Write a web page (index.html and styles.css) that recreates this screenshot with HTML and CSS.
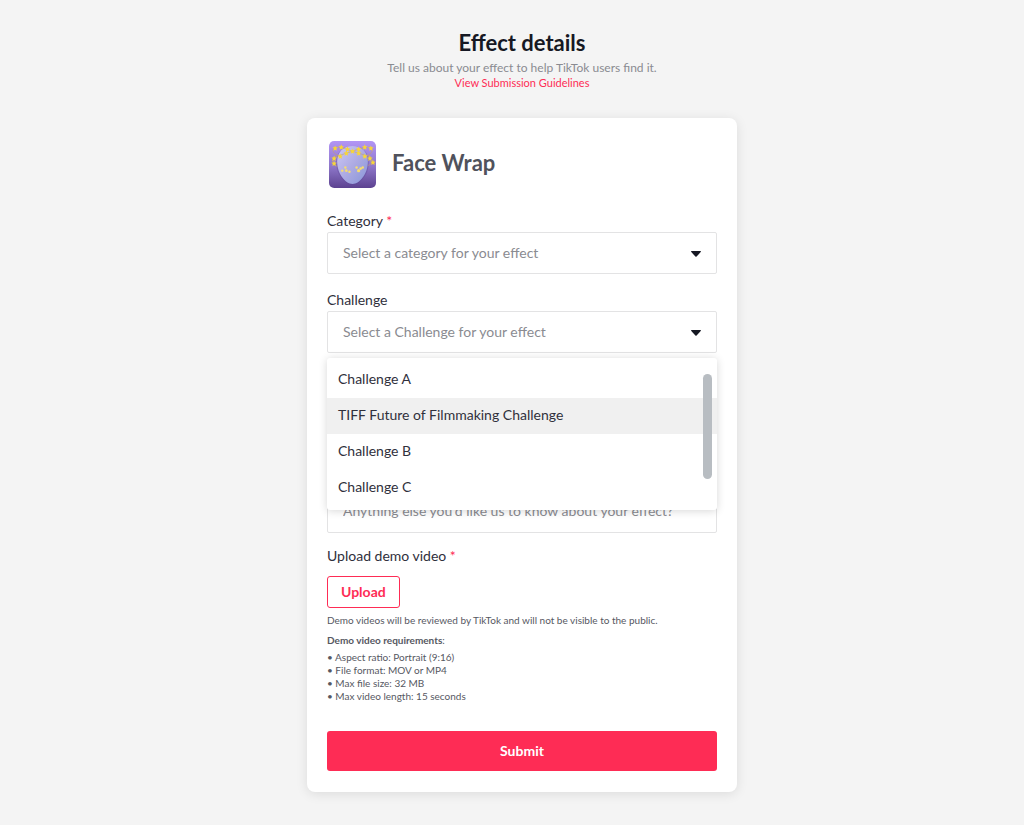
FILE: index.html
```html
<!DOCTYPE html>
<html lang="en">
<head>
    <meta charset="UTF-8">
    <meta name="viewport" content="width=device-width, initial-scale=1.0">
    <title>Effect details</title>
    <link rel="stylesheet" href="styles.css">
</head>
<body>
    <header class="header">
        <h1>Effect details</h1>
        <p>Tell us about your effect to help TikTok users find it.</p>
        <a href="#">View Submission Guidelines</a>
    </header>

    <form class="card">
        <div class="effect">
            <svg class="effect-icon" viewBox="0 0 46 46" aria-hidden="true">
                <defs>
                    <linearGradient id="iconBg" x1="0" y1="0" x2="0" y2="1">
                        <stop offset="0" stop-color="#b295f5"/>
                        <stop offset="0.55" stop-color="#8d76c9"/>
                        <stop offset="1" stop-color="#5c4290"/>
                    </linearGradient>
                    <linearGradient id="iconFace" x1="0" y1="0" x2="1" y2="1">
                        <stop offset="0" stop-color="#cdc9f5"/>
                        <stop offset="0.5" stop-color="#aeabe3"/>
                        <stop offset="1" stop-color="#8795d8"/>
                    </linearGradient>
                    <path id="star" d="M0-2.7 .8-.9 2.7-.8 1.2.6 1.7 2.5 0 1.5-1.7 2.5-1.2.6-2.7-.8-.8-.9z"/>
                </defs>
                <rect width="46" height="46" rx="5" fill="url(#iconBg)"/>
                <path d="M23 5C12 5 7 13 7 21c0 12 9 22 16 22s16-10 16-22C39 13 34 5 23 5z" fill="#594596" opacity="0.35"/>
                <path d="M23 5C13 5 8 12 8 20c0 12 8 22 15 22s15-10 15-22C38 12 33 5 23 5z" fill="url(#iconFace)"/>
                <path d="M12 15C2 13 2 6 8 6c5 0 9 2 15 4s12 4 17 5M35 15c9-2 9-9 3-9-5 0-9 2-15 4S10 14 5 16M5 16c-3 3-2 7 3 9M40 15c4 3 3 7-2 9" fill="none" stroke="#c5a36a" stroke-width="0.6"/>
                <g fill="#f7d638">
                    <use href="#star" x="6" y="7"/>
                    <use href="#star" x="12" y="6"/>
                    <use href="#star" x="18" y="8"/>
                    <use href="#star" x="23" y="10"/>
                    <use href="#star" x="29" y="8"/>
                    <use href="#star" x="35" y="6"/>
                    <use href="#star" x="41" y="7"/>
                    <use href="#star" x="11" y="15"/>
                    <use href="#star" x="17" y="12"/>
                    <use href="#star" x="29" y="12"/>
                    <use href="#star" x="35" y="15"/>
                    <use href="#star" x="5" y="17"/>
                    <use href="#star" x="5" y="22"/>
                    <use href="#star" x="40" y="17"/>
                    <use href="#star" x="43" y="21"/>
                </g>
                <g fill="#f7dc70">
                    <circle cx="13" cy="29" r="1.2"/>
                    <circle cx="16" cy="26" r="1.2"/>
                    <circle cx="17" cy="29" r="1.3"/>
                    <circle cx="20" cy="30" r="1.2"/>
                    <circle cx="27" cy="26" r="1.2"/>
                    <circle cx="29" cy="29" r="1.6"/>
                    <circle cx="31" cy="27" r="1.3"/>
                    <circle cx="33" cy="26" r="1.2"/>
                </g>
            </svg>
            <h2>Face Wrap</h2>
        </div>

        <div class="field">
            <label for="category">Category <span class="required">*</span></label>
            <div class="select">
                <select id="category" required>
                    <option value="">Select a category for your effect</option>
                </select>
                <svg class="arrow" viewBox="0 0 10 6" aria-hidden="true"><path d="M.5 0h9q.8.3.2 1L5.6 5.6q-.6.5-1.2 0L.3 1Q-.3.3.5 0z"/></svg>
            </div>
        </div>

        <div class="field">
            <label for="challenge">Challenge</label>
            <div class="select">
                <select id="challenge">
                    <option value="">Select a Challenge for your effect</option>
                </select>
                <svg class="arrow" viewBox="0 0 10 6" aria-hidden="true"><path d="M.5 0h9q.8.3.2 1L5.6 5.6q-.6.5-1.2 0L.3 1Q-.3.3.5 0z"/></svg>
                <div class="menu">
                    <ul role="listbox" aria-label="Challenge">
                        <li role="option">Challenge A</li>
                        <li role="option" class="active" aria-selected="true">TIFF Future of Filmmaking Challenge</li>
                        <li role="option">Challenge B</li>
                        <li role="option">Challenge C</li>
                    </ul>
                    <span class="scroll-thumb"></span>
                </div>
            </div>
        </div>

        <div class="field notes">
            <input type="text" aria-label="Notes" placeholder="Anything else you'd like us to know about your effect?">
        </div>

        <div class="upload">
            <label for="uploadButton">Upload demo video <span class="required">*</span></label>
            <button type="button" id="uploadButton" class="upload-button">Upload</button>
            <p>Demo videos will be reviewed by TikTok and will not be visible to the public.</p>
            <p><strong>Demo video requirements</strong>:</p>
            <ul class="requirements">
                <li>• Aspect ratio: Portrait (9:16)</li>
                <li>• File format: MOV or MP4</li>
                <li>• Max file size: 32 MB</li>
                <li>• Max video length: 15 seconds</li>
            </ul>
        </div>

        <button type="submit" class="submit-button">Submit</button>
    </form>
</body>
</html>
```

FILE: styles.css
```css
*, *:before, *:after {
    box-sizing: border-box;
}

body {
    min-height: 100vh;
    margin: 0;
    padding: 30px 0 33px 20px;
    background: #f4f4f4;
    color: #30303c;
    font-family: Lato, sans-serif;
    font-size: 14px;
    line-height: 18px;
}

h1, h2, p, ul {
    margin: 0;
    padding: 0;
}

ul {
    list-style: none;
}

.header {
    display: flex;
    flex-direction: column;
    align-items: center;
    margin-bottom: 28px;
}

.header h1 {
    margin-bottom: 4px;
    color: #161823;
    font-size: 22px;
    line-height: 26px;
}

.header p {
    color: #8a8b91;
    font-size: 12px;
    line-height: 15px;
}

.header a {
    color: #fe2c55;
    font-size: 11px;
    line-height: 15px;
    text-decoration: none;
}

.card {
    max-width: 430px;
    margin: 0 auto;
    padding: 23px 20px 21px;
    background: #fff;
    border-radius: 8px;
    box-shadow: 0 2px 12px rgba(0, 0, 0, 0.1);
}

.effect {
    display: flex;
    align-items: center;
    gap: 16px;
    margin-bottom: 24px;
    padding-left: 2px;
}

.effect-icon {
    width: 47px;
    height: 47px;
}

.effect h2 {
    padding-bottom: 4px;
    color: #50525c;
    font-size: 22px;
    line-height: 26px;
}

.field {
    display: flex;
    flex-direction: column;
    gap: 2px;
    margin-bottom: 17px;
}

.required {
    color: #fe2c55;
}

.select {
    position: relative;
}

.field select,
.field input {
    width: 100%;
    height: 42px;
    padding: 0 15px 2px;
    border: 1px solid #e3e3e4;
    border-radius: 2px;
    background: #fff;
    color: #8a8b91;
    font-family: inherit;
    font-size: 14px;
    appearance: none;
}

.field input {
    padding-bottom: 4px;
}

.field input::placeholder {
    color: #8a8b91;
}

.arrow {
    position: absolute;
    top: 19px;
    right: 16px;
    width: 10px;
    height: 6px;
    fill: #161823;
    pointer-events: none;
}

.menu {
    position: absolute;
    top: 100%;
    left: 0;
    z-index: 1;
    width: 100%;
    margin-top: 5px;
    padding: 4px 0;
    background: #fff;
    border-radius: 3px;
    box-shadow: 0 1px 8px rgba(0, 0, 0, 0.16);
}

.menu li {
    padding: 8px 11px 10px;
}

.menu .active {
    background: #f0f0f0;
}

.scroll-thumb {
    position: absolute;
    top: 16px;
    right: 5px;
    width: 9px;
    height: 105px;
    border-radius: 5px;
    background: #b8bdc2;
}

.notes {
    margin-top: 138px;
    margin-bottom: 14px;
}

.upload {
    display: flex;
    flex-direction: column;
    align-items: flex-start;
    margin-bottom: 28px;
    color: #565862;
    font-size: 10px;
    line-height: 20px;
}

.upload label {
    color: #30303c;
    font-size: 14px;
    line-height: 18px;
}

.upload-button {
    height: 32px;
    margin: 11px 0 2px;
    padding: 0 13px 2px;
    border: 1px solid #fe2c55;
    border-radius: 3px;
    background: #fff;
    color: #fe2c55;
    font-family: inherit;
    font-size: 14px;
    font-weight: bold;
}

.requirements {
    margin-top: 1px;
    line-height: 13px;
}

.submit-button {
    display: block;
    width: 100%;
    height: 40px;
    padding: 0 0 2px;
    border: none;
    border-radius: 3px;
    background: #fe2c55;
    color: #fff;
    font-family: inherit;
    font-size: 14px;
    font-weight: bold;
}
```
